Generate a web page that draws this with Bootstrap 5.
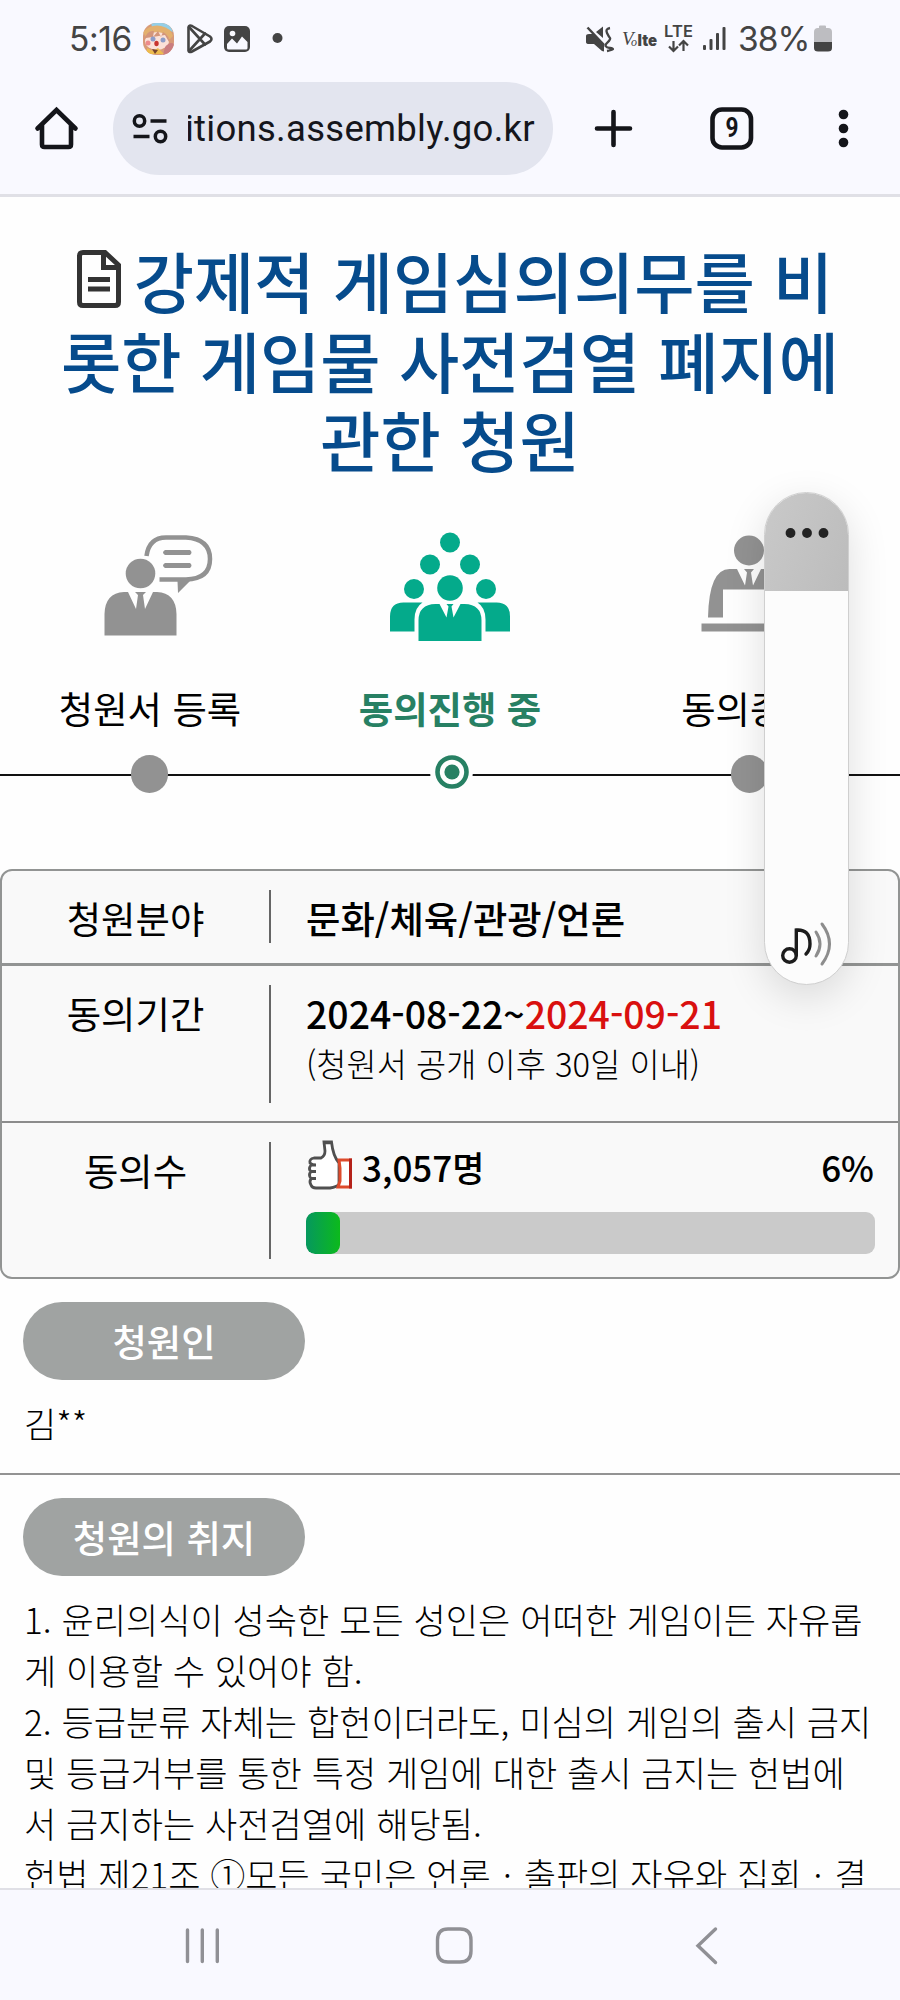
<!DOCTYPE html>
<html lang="ko">
<head>
<meta charset="utf-8">
<meta name="viewport" content="width=device-width, initial-scale=1">
<title>국민동의청원</title>
<link rel="stylesheet" href="https://cdn.jsdelivr.net/npm/bootstrap@5.3.0/dist/css/bootstrap.min.css">
<style>
  body { width: 900px; height: 2000px; overflow: hidden; color: #000; background: #fefefe; font-family: "Noto Sans CJK KR", sans-serif; }
  svg { display: block; flex: none; overflow: visible; }
  .text-line { white-space: nowrap; }

  /* phone chrome */
  .chrome-bg { background: #f9f9ff; }
  .status-bar { height: 76px; padding: 2px 67px 0 69px; color: #444; font: 400 33.5px/74px Inter, sans-serif; }
  .clock { width: 74px; letter-spacing: -.4px; }
  .battery-text { width: 75px; margin-left: 10px; letter-spacing: -.9px; }
  .toolbar { height: 121px; border-bottom: 3px solid #e0e0e6; padding: 6px 0 0 35px; }
  .url-pill { width: 440px; height: 93px; margin-left: 35px; background: #e3e5ef; padding-left: 19px; }
  .url-text { width: 347px; margin-left: 20px; overflow: hidden; font: 400 36.5px/60px Roboto, sans-serif; letter-spacing: .28px; color: #15161c; }

  /* petition heading */
  .petition-title { height: 303px; padding-top: 41px; margin: 0; color: #064b8c; font-size: 65.5px; font-weight: 500; }
  .petition-title .text-line { height: 79px; line-height: 79px; }
  .petition-title .text-line:first-child { height: 82px; line-height: 79px; padding-left: 8px; }

  /* progress steps */
  .steps { height: 369px; position: relative; }
  .steps::before { content: ""; position: absolute; left: 0; right: 0; top: 274px; height: 2px; background: #111; }
  .step-item { width: 300px; flex: none; position: relative; }
  .step-icon { height: 178px; padding-top: 30px; }
  .step-label { height: 60px; line-height: 60px; font-size: 37.4px; }
  .step-active { color: #278063; font-weight: 700; }
  .step-dot { width: 37.5px; height: 37.5px; background: #929292; margin: 17px 1px 0 0; }
  .dot-ring { width: 43px; height: 43px; margin: 12px 0 0 3px; background: #fefefe; }

  /* summary table */
  .summary { height: 410px; border: 2px solid #929493; border-radius: 12px; background: #f9f9f9; font-size: 37.4px; }
  .summary-key { width: 269px; flex: none; border-right: 2px solid #666; text-align: center; }
  .summary-key, .summary-line { line-height: 56px; }
  .summary-val { padding-left: 35px; flex: 1; font-weight: 500; }
  .row-field { height: 95px; padding: 19px 0 20px; border-bottom: 3px solid #929493; }
  .row-period { height: 157px; padding: 19px 0 18px; border-bottom: 2px solid #8c8c8c; }
  .row-count { height: 154px; padding: 19px 0 18px; }
  .deadline { color: #d9100f; }
  .note { font-size: 32.8px; font-weight: 300; line-height: 43px; }
  .vote-head { height: 52px; }
  .count-text { font-size: 35px; line-height: 50px; }
  .count-total { margin-left: 8px; }
  .vote-bar { width: 569px; height: 42px; border-radius: 9px; background: #cacaca; margin-top: 18px; }
  .vote-bar .progress-bar { border-radius: 9px; background: linear-gradient(90deg, #06985e, #0cba1c); }

  /* petition text */
  .section-pill { width: 282px; height: 77.5px; margin: 0 0 17.5px 23px; background: #a0a3a2; color: #fff; font-size: 37.4px; font-weight: 500; line-height: 78px; text-align: center; }
  .body-text { padding-left: 24px; font-size: 35.1px; font-weight: 300; line-height: 51px; }
  .mid-dot { padding: 0 2.2px; }
  .section-name { height: 196px; padding-top: 23px; border-bottom: 2px solid #939393; }
  .section-body { height: 413px; padding-top: 23px; overflow: hidden; }

  .nav-keys { height: 112px; border-top: 2px solid #e0e0e6; }

  /* floating volume slider */
  .volume { position: absolute; left: 764px; top: 492px; width: 85px; height: 493px; border-radius: 43px; background: #fcfcfc; border: 1px solid #cfcfcf; box-shadow: 0 12px 40px rgba(0,0,0,.13); overflow: hidden; }
  .volume-head { height: 98px; background: linear-gradient(110deg, #c9c9c9, #bcbcbc); padding-top: 35px; }
</style>
</head>
<body class="position-relative">

<header class="chrome-bg">
  <div class="status-bar d-flex align-items-center">
    <div class="clock text-line">5:16</div>
    <svg width="145" height="32" viewBox="0 0 145 32">
      <defs><clipPath id="face"><rect x="0" y="0" width="31" height="32" rx="13"/></clipPath></defs>
      <g clip-path="url(#face)">
        <rect width="31" height="32" fill="#d89a78"/>
        <path d="M8 0H26L30 9L20 5L9 4Z" fill="#94cfe8"/>
        <path d="M0 9Q8 1 18 3T30 13L27 16L4 16Z" fill="#e3b06e"/>
        <ellipse cx="14" cy="18" rx="12" ry="9" fill="#fbe1d8"/>
        <path d="M1 17Q4 7 11 8L10 14L15 8L18 14L20 9Q27 13 26 19L22 12L3 15Z" fill="#d3957b"/>
        <circle cx="10" cy="16" r="2.500" fill="#8d9cc8"/><circle cx="20" cy="17" r="2.500" fill="#8d9cc8"/>
        <ellipse cx="13.500" cy="20.500" rx="2.200" ry="2.800" fill="#c8342f"/>
        <circle cx="5" cy="20" r="2.500" fill="#ed8b8c"/>
        <path d="M22 24Q28 17 32 22V32H20Z" fill="#ca7d80"/>
        <path d="M4 25L10 28L15 25L21 31H4Z" fill="#edbc4e"/><path d="M9 26l3 5 3-4z" fill="#75442e"/>
      </g>
      <g fill="none" stroke="#444" stroke-width="2.600" stroke-linejoin="round" stroke-linecap="round">
        <path d="M45.500 4.500V27.500Q46 30 49 28.500L67 18.500Q70 16 67 13.500L49 3Q46 1.500 45.500 4.500Z"/>
        <path d="M46 4L62 21.500M46 28L62 10.500"/>
      </g>
      <rect x="81" y="3" width="26" height="26" rx="5" fill="#444"/>
      <path d="M84 21L89 15.500L94 20.500L99 13.500L104.500 19V25Q104.500 26.500 103 26.500H85.500Q84 26.500 84 25Z" fill="#f9f9ff"/>
      <circle cx="89.500" cy="10.500" r="2.800" fill="#f9f9ff"/>
      <circle cx="134.500" cy="15" r="5" fill="#444"/>
    </svg>
    <svg class="ms-auto" width="142" height="32" viewBox="0 -2 142 32">
      <g fill="#444">
        <path d="M0 11Q0 9 3 9H8L18 19V26.500L16 26L8 19H3Q0 19 0 17ZM10 7L17 1.500V13Z"/>
        <path d="M1.500 2.500L18 20" stroke="#444" stroke-width="2.500"/>
        <path d="M24 3Q19 4 21 8T24 13T21 18T24 23T21 26" fill="none" stroke="#444" stroke-width="2.400"/>
        <text x="36" y="20" font-family="Liberation Serif, serif" font-style="italic" font-size="19">V</text>
        <text x="45" y="21" font-family="Liberation Serif, serif" font-style="italic" font-size="12">o</text>
        <text x="51.500" y="21" font-family="Inter, sans-serif" font-weight="900" font-size="16" textLength="19.500" lengthAdjust="spacingAndGlyphs">lte</text>
        <text x="78" y="12" font-family="Inter, sans-serif" font-weight="600" font-size="16.500" textLength="29">LTE</text>
      </g>
      <g fill="none" stroke="#444" stroke-width="2.200"><path d="M87.500 16V26M83 21.500L87.500 26L92 21.500M97.500 26V16M93 20.500L97.500 16L102 20.500"/></g>
      <g fill="#444"><rect x="117" y="20" width="3" height="5" rx="1"/><rect x="123.500" y="14" width="3" height="11" rx="1"/><rect x="130" y="8" width="3" height="17" rx="1"/><rect x="136.500" y="2" width="3" height="23" rx="1"/></g>
    </svg>
    <div class="battery-text text-line">38%</div>
    <svg width="20" height="28" viewBox="0 0 20 28">
      <path d="M6 3V1.500Q6 .5 7 .5H12Q13 .5 13 1.500V3H15Q19 3 19 7V18H1V7Q1 3 5 3Z" fill="#bdbdc1"/>
      <path d="M1 17H19V23Q19 26.500 15 26.500H5Q1 26.500 1 23Z" fill="#444"/>
    </svg>
  </div>
  <div class="toolbar d-flex align-items-start">
    <svg width="43" height="93" viewBox="0 0 43 93"><path d="M2.500 46.500L21.500 28L40.500 46.500M7 43V62.500Q7 65 9.500 65H33.500Q36 65 36 62.500V43" fill="none" stroke="#14151a" stroke-width="4.600" stroke-linecap="round" stroke-linejoin="miter"/></svg>
    <div class="url-pill rounded-pill d-flex align-items-center">
      <svg width="36" height="30" viewBox="0 0 36 30"><g fill="none" stroke="#14151a" stroke-width="3.500"><circle cx="7.500" cy="7" r="5.200"/><circle cx="28.500" cy="22.500" r="5.200"/><path d="M18.500 7H34.500M1.500 22.500H17.500"/></g></svg>
      <div class="url-text d-flex justify-content-end"><span class="text-line">petitions.assembly.go.kr</span></div>
    </div>
    <svg width="332" height="93" viewBox="0 0 332 93">
      <path d="M44 46.500H77M60.500 30V63" stroke="#14151a" stroke-width="4.600" stroke-linecap="round" fill="none"/>
      <rect x="159.500" y="27.500" width="38.500" height="38" rx="9.500" fill="none" stroke="#14151a" stroke-width="4.600"/>
      <text x="179" y="55" text-anchor="middle" font-family="Roboto, sans-serif" font-weight="700" font-size="27" textLength="13" lengthAdjust="spacingAndGlyphs" fill="#14151a">9</text>
      <g fill="#14151a"><circle cx="290.500" cy="32.500" r="4.800"/><circle cx="290.500" cy="46.500" r="4.800"/><circle cx="290.500" cy="60.500" r="4.800"/></g>
    </svg>
  </div>
</header>

<main>
  <h1 class="petition-title text-center">
    <span class="text-line d-flex justify-content-center align-items-center"><svg class="me-2" width="51" height="58" viewBox="-2 0 51 58"><path d="M6 2.500H28L41.500 15V52Q41.500 55.500 38 55.500H6Q2.500 55.500 2.500 52V6Q2.500 2.500 6 2.500Z" fill="none" stroke="#333" stroke-width="5"/><path d="M26.500 3V17.500H41M11 29.500H33M11 39H33" stroke="#333" stroke-width="5" fill="none"/></svg>강제적 게임심의의무를 비</span>
    <span class="text-line d-block">롯한 게임물 사전검열 폐지에</span>
    <span class="text-line d-block">관한 청원</span>
  </h1>

  <section class="steps d-flex">
    <div class="step-item d-flex flex-column align-items-center">
      <div class="step-icon">
        <svg width="109" height="106" viewBox="96 525 109 106"><g fill="#929292">
          <circle cx="140.500" cy="568.500" r="14.800"/>
          <path d="M104.500 630.500V609Q105 588 124 587H128L136 604L138 590L135 587H146L143 590L145 604L153 587H157Q176 588 176.500 609V630.500Z"/>
          <path d="M146.500 551Q149 532.500 166 532.500H186Q210 534 210 554Q210 574 186 574.500H159.500" fill="none" stroke="#929292" stroke-width="4.500"/>
          <path d="M177.500 576H190L178 588ZM165 545H190Q193 547.500 190 550H165Q161 547.500 165 545ZM165 558H190Q193 560.500 190 563H165Q161 560.500 165 558Z"/>
        </g></svg>
      </div>
      <div class="step-label text-line">청원서 등록</div>
      <div class="step-dot rounded-circle"></div>
    </div>
    <div class="step-item d-flex flex-column align-items-center step-active">
      <div class="step-icon">
        <svg width="120" height="110" viewBox="390.500 529.500 120 110"><g fill="#04aa8b">
          <circle cx="450.500" cy="542" r="10"/><circle cx="430.500" cy="564" r="10"/><circle cx="470.500" cy="564" r="10"/>
          <circle cx="414.500" cy="588.500" r="10"/><circle cx="486.500" cy="588.500" r="10"/><circle cx="450.500" cy="587.500" r="12.800"/>
          <path d="M390.500 631V616Q390.500 602 404 602H423Q415 607 415 619V631ZM510.500 631V616Q510.500 602 497 602H478Q486 607 486 619V631Z"/>
          <path d="M419 640.500V620Q419 604 436 603.500H440L447 617L449 606L447 603.500H454L452 606L454 617L461 603.500H465Q482 604 482 620V640.500Z"/>
        </g></svg>
      </div>
      <div class="step-label text-line">동의진행 중</div>
      <div class="dot-ring rounded-circle d-flex align-items-center justify-content-center">
        <svg width="34" height="34" viewBox="0 0 34 34"><circle cx="17" cy="17" r="14.500" fill="none" stroke="#278063" stroke-width="4.600"/><circle cx="17" cy="17" r="7.600" fill="#278063"/></svg>
      </div>
    </div>
    <div class="step-item d-flex flex-column align-items-center">
      <div class="step-icon">
        <svg width="97" height="106" viewBox="702 529.5 97 106"><g fill="#929292">
          <circle cx="749" cy="550" r="15"/>
          <path d="M708 617Q709 568 730 568.500H737L745 585L747 572L744 568.500H754L751 572L753 585L761 568.500H768Q789 568 790 617H775V589H723V617ZM701.500 623H797V631H701.500Z"/>
        </g></svg>
      </div>
      <div class="step-label text-line">동의종료</div>
      <div class="step-dot rounded-circle"></div>
    </div>
  </section>

  <section class="summary">
    <div class="row-field d-flex">
      <div class="summary-key">청원분야</div>
      <div class="summary-val summary-line text-line">문화/체육/관광/언론</div>
    </div>
    <div class="row-period d-flex">
      <div class="summary-key">동의기간</div>
      <div class="summary-val">
        <div class="summary-line text-line">2024-08-22~<span class="deadline">2024-09-21</span></div>
        <div class="note text-line">(청원서 공개 이후 30일 이내)</div>
      </div>
    </div>
    <div class="row-count d-flex">
      <div class="summary-key">동의수</div>
      <div class="summary-val">
        <div class="vote-head d-flex align-items-start">
          <svg width="48" height="48" viewBox="-1 0 48 48">
            <path d="M17 0L18 9Q18 14 14 16H7Q2 17 3 21Q5 23 9 23H4Q1 27 4 29.500H9H4Q1 33 4 36.500H9H4Q2 40 4 43Q5 46 9 46H23Q30 45 32 42V21Q26 14 24.500 0ZM15.700 .8H25.700" fill="#fff" stroke="#505050" stroke-width="2.800"/>
            <path d="M32 18H43.500V45H31L33 39V26Z" fill="#fff" stroke="#dd4b2c" stroke-width="3"/><path d="M43.500 16.500V46.500" stroke="#b5221a" stroke-width="3"/>
          </svg>
          <span class="count-text count-total">3,057명</span>
          <span class="count-text ms-auto me-4">6%</span>
        </div>
        <div class="vote-bar progress"><div class="progress-bar" role="progressbar" style="width: 6%"></div></div>
      </div>
    </div>
  </section>

  <section class="section-name">
    <div class="section-pill rounded-pill">청원인</div>
    <div class="body-text text-line">김**</div>
  </section>
  <section class="section-body">
    <div class="section-pill rounded-pill">청원의 취지</div>
    <div class="body-text">
      <div class="text-line">1. 윤리의식이 성숙한 모든 성인은 어떠한 게임이든 자유롭</div>
      <div class="text-line">게 이용할 수 있어야 함.</div>
      <div class="text-line">2. 등급분류 자체는 합헌이더라도, 미심의 게임의 출시 금지</div>
      <div class="text-line">및 등급거부를 통한 특정 게임에 대한 출시 금지는 헌법에</div>
      <div class="text-line">서 금지하는 사전검열에 해당됨.</div>
      <div class="text-line">헌법 제21조 ①모든 국민은 언론 <span class="mid-dot">·</span> 출판의 자유와 집회 <span class="mid-dot">·</span> 결</div>
    </div>
  </section>
</main>

<footer class="nav-keys chrome-bg d-flex justify-content-center position-relative">
  <svg width="540" height="110" viewBox="180 1890 540 110"><g fill="none" stroke="#909095" stroke-width="3.400" stroke-linecap="round">
    <path d="M187.500 1930V1961.500M202.300 1930V1961.500M217.300 1930V1961.500"/>
    <path d="M448 1929H460Q471 1929 471 1940V1951Q471 1962 460 1962H448Q437.500 1962 437.500 1951V1940Q437.500 1929 448 1929Z"/>
    <path d="M715.500 1929L698 1945.700L715.500 1962.500"/>
  </g></svg>
</footer>

<div class="volume d-flex flex-column justify-content-between">
  <div class="volume-head"><svg class="mx-auto" width="44" height="10" viewBox="0 0 44 10"><g fill="#222"><circle cx="5.500" cy="5" r="4.900"/><circle cx="22" cy="5" r="4.900"/><circle cx="38.500" cy="5" r="4.900"/></g></svg></div>
  <svg class="mx-auto mb-3" width="51" height="46" viewBox="0 0 51 46">
    <g fill="none" stroke="#1c1c1c" stroke-width="3.400" stroke-linecap="round"><circle cx="8.500" cy="33.500" r="6.800"/><path d="M15.300 33V8Q29 7 29 22Q29 28 25 32"/></g>
    <g fill="none" stroke="#8d8d8d" stroke-width="3" stroke-linecap="round"><path d="M35 10Q43 22 35 34M41 2Q56 22 41 42"/></g>
  </svg>
</div>

<script src="https://cdn.jsdelivr.net/npm/bootstrap@5.3.0/dist/js/bootstrap.bundle.min.js"></script>
</body>
</html>
